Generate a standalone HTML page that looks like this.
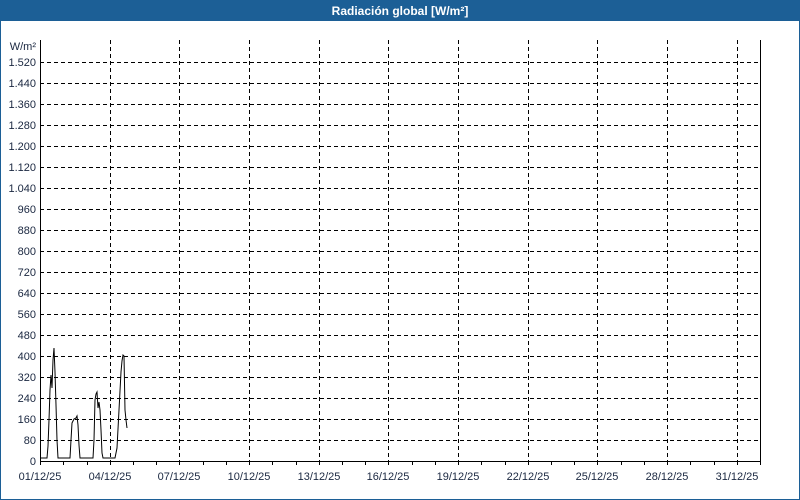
<!DOCTYPE html>
<html><head><meta charset="utf-8"><style>
body{margin:0;width:800px;height:500px;overflow:hidden;background:#fff;font-family:"Liberation Sans","DejaVu Sans",sans-serif}
</style></head><body>
<svg width="800" height="500" xmlns="http://www.w3.org/2000/svg" style="position:absolute;left:0;top:0">
<rect x="0" y="0" width="800" height="500" fill="#fff"/>
<rect x="0.5" y="0.5" width="799" height="499" fill="none" stroke="#1c5f96" stroke-width="1"/>
<rect x="0" y="0" width="800" height="21" fill="#1c5f96"/>
<text x="400" y="15" fill="#fff" font-size="12" font-weight="bold" text-anchor="middle">Radiación global [W/m²]</text>
<g stroke="#000" stroke-width="1" stroke-dasharray="4,3" fill="none">
<path d="M40 62.5H760M40 83.5H760M40 104.5H760M40 125.5H760M40 146.5H760M40 167.5H760M40 188.5H760M40 209.5H760M40 230.5H760M40 251.5H760M40 272.5H760M40 293.5H760M40 314.5H760M40 335.5H760M40 356.5H760M40 377.5H760M40 398.5H760M40 419.5H760M40 440.5H760"/>
<path d="M110.5 40V461M179.5 40V461M249.5 40V461M319.5 40V461M388.5 40V461M458.5 40V461M528.5 40V461M597.5 40V461M667.5 40V461M737.5 40V461"/>
</g>
<path d="M40.5 40V461.5H760.5V40" stroke="#000" fill="none"/>
<g stroke="#000">
<path d="M40.5 461v4M63.5 461v4M87.5 461v4M110.5 461v4M133.5 461v4M156.5 461v4M179.5 461v4M203.5 461v4M226.5 461v4M249.5 461v4M272.5 461v4M296.5 461v4M319.5 461v4M342.5 461v4M365.5 461v4M388.5 461v4M412.5 461v4M435.5 461v4M458.5 461v4M481.5 461v4M505.5 461v4M528.5 461v4M551.5 461v4M574.5 461v4M597.5 461v4M621.5 461v4M644.5 461v4M667.5 461v4M690.5 461v4M714.5 461v4M737.5 461v4M760.5 461v4"/>
</g>
<polyline fill="none" stroke="#000" stroke-width="1" points="40,458 47,458 48,446 49,420 50,390 51,375 52,388 53,360 54,348 55,372 56,405 57,440 58,458 70,458 71,440 72,423 73,421 74,419 76,418 77,416 78,425 79,445 80,458 93,458 94,440 95,400 96,394 97,392 98,408 99,402 100,410 101,430 102,453 103,458 115,458 117,448 119,410 121,372 122,361 123,355 124,356 125,410 126,420 127,428"/>
<g font-size="11" fill="#1a2740" text-anchor="end">
<text x="36" y="50">W/m²</text>
<text x="36" y="66">1.520</text><text x="36" y="87">1.440</text><text x="36" y="108">1.360</text><text x="36" y="129">1.280</text><text x="36" y="150">1.200</text><text x="36" y="171">1.120</text><text x="36" y="192">1.040</text><text x="36" y="213">960</text><text x="36" y="234">880</text><text x="36" y="255">800</text><text x="36" y="276">720</text><text x="36" y="297">640</text><text x="36" y="318">560</text><text x="36" y="339">480</text><text x="36" y="360">400</text><text x="36" y="381">320</text><text x="36" y="402">240</text><text x="36" y="423">160</text><text x="36" y="444">80</text><text x="36" y="465">0</text>
</g>
<g font-size="11" fill="#1a2740" text-anchor="middle">
<text x="40" y="480">01/12/25</text><text x="110" y="480">04/12/25</text><text x="179" y="480">07/12/25</text><text x="249" y="480">10/12/25</text><text x="319" y="480">13/12/25</text><text x="388" y="480">16/12/25</text><text x="458" y="480">19/12/25</text><text x="528" y="480">22/12/25</text><text x="597" y="480">25/12/25</text><text x="667" y="480">28/12/25</text><text x="737" y="480">31/12/25</text>
</g>
</svg>
</body></html>
